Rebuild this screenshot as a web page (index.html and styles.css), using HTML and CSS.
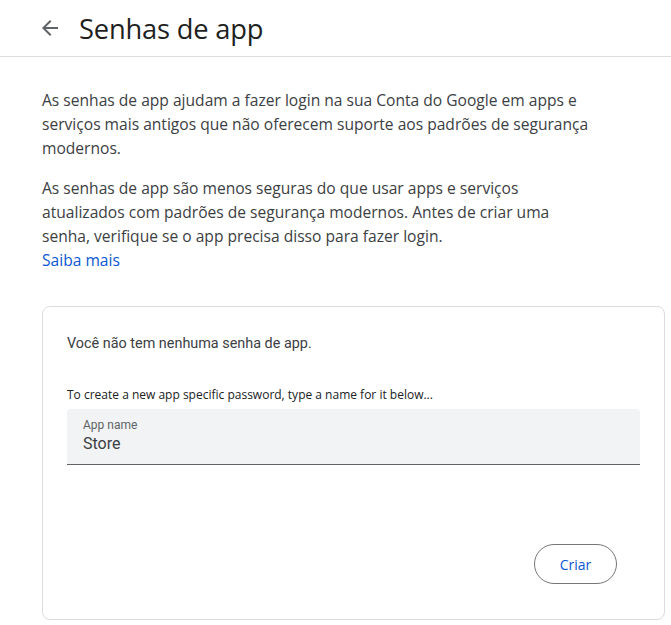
FILE: index.html
```html
<!DOCTYPE html>
<html>
<head>
  <title>Senhas de app</title>
  <link rel="stylesheet" href="styles.css">
</head>
<body>

  <div class="header">
    <a class="back" href="#">
      <svg width="24" height="24" viewBox="0 0 24 24"><path d="M20 11H7.83l5.59-5.59L12 4l-8 8 8 8 1.41-1.41L7.83 13H20v-2z" fill="#5f6368"/></svg>
    </a>
    <h1>Senhas de app</h1>
  </div>

  <div class="content">
    <p>As senhas de app ajudam a fazer login na sua Conta do Google em apps e serviços mais antigos que não oferecem suporte aos padrões de segurança modernos.</p>
    <p>As senhas de app são menos seguras do que usar apps e serviços atualizados com padrões de segurança modernos. Antes de criar uma senha, verifique se o app precisa disso para fazer login.<br><a class="link" href="#">Saiba mais</a></p>

    <div class="card">
      <div class="empty">Você não tem nenhuma senha de app.</div>
      <div class="hint">To create a new app specific password, type a name for it below...</div>
      <div class="field">
        <label for="app">App name</label>
        <input type="text" id="app" value="Store">
      </div>
      <div class="actions">
        <button class="create">Criar</button>
      </div>
    </div>
  </div>

</body>
</html>
```

FILE: styles.css
```css
body{
    margin: 0;
    font-family: 'Open Sans', sans-serif;
    color: #1f1f1f;
    background: #fff;
}

.header{
    display: flex;
    align-items: center;
    height: 57px;
    padding-left: 38px;
    border-bottom: 1px solid #dadce0;
    box-sizing: border-box;
}

.back{
    display: flex;
    width: 24px;
    height: 24px;
    margin-right: 17px;
}

.header h1{
    margin: 0;
    font-size: 27.3px;
    font-weight: 400;
    color: #1f1f1f;
    letter-spacing: -0.2px;
}

.content{
    padding: 31px 6px 0 42px;
}

.content p{
    width: 548px;
    margin: 0 0 16px;
    font-size: 15.6px;
    line-height: 24px;
    color: #3c4043;
}

.link{
    color: #0b57d0;
    text-decoration: none;
}

.card{
    margin-top: 34px;
    height: 314px;
    border: 1px solid #dadce0;
    border-radius: 8px;
    padding: 0 24px;
    box-sizing: border-box;
}

.empty{
    padding-top: 28px;
    font-family: Roboto, sans-serif;
    font-size: 14.4px;
    color: #3c4043;
}

.hint{
    margin-top: 34px;
    font-size: 12px;
    color: #202124;
}

.field{
    margin-top: 6px;
    height: 56px;
    background: #f1f3f4;
    border-bottom: 1px solid #5f6368;
    border-radius: 4px 4px 0 0;
    padding: 9px 16px 0;
    box-sizing: border-box;
    font-family: Roboto, sans-serif;
}

.field label{
    display: block;
    font-size: 12px;
    color: #5f6368;
}

.field input{
    border: none;
    background: none;
    outline: none;
    padding: 0;
    margin-top: 2px;
    font-family: Roboto, sans-serif;
    font-size: 16px;
    color: #3c4043;
    width: 100%;
}

.actions{
    display: flex;
    justify-content: flex-end;
    margin-top: 79px;
}

.create{
    width: 83px;
    height: 40px;
    margin-right: 23px;
    border: 1px solid #747775;
    border-radius: 20px;
    background: #fff;
    color: #0b57d0;
    font-family: 'Open Sans', sans-serif;
    font-size: 14px;
    font-weight: 500;
}
```
